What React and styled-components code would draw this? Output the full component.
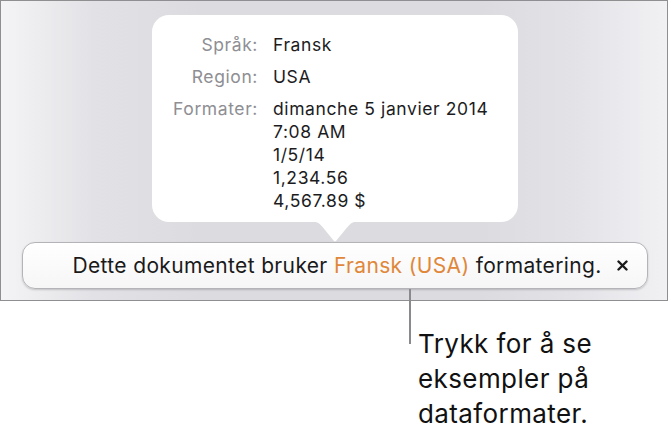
import React from 'react';
import styled, { createGlobalStyle } from 'styled-components';

const GlobalStyle = createGlobalStyle`
  html, body {
    margin: 0;
    padding: 0;
    background: #ffffff;
  }
  body {
    font-family: Inter, "Noto Sans", "Liberation Sans", sans-serif;
    -webkit-font-smoothing: antialiased;
  }
`;

const formats = [
  'dimanche 5 janvier 2014',
  '7:08 AM',
  '1/5/14',
  '1,234.56',
  '4,567.89 $',
];

function App() {
  return (
    <Page>
      <GlobalStyle />
      <Frame>
        <Popover>
          <Label>Språk:</Label>
          <Value>Fransk</Value>
          <Label>Region:</Label>
          <Value>USA</Value>
          <Label>Formater:</Label>
          <Value>
            {formats.map((f) => (
              <div key={f}>{f}</div>
            ))}
          </Value>
        </Popover>

        <Banner>
          <Message>
            Dette dokumentet bruker <Highlight>Fransk (USA)</Highlight> formatering.
          </Message>
          <CloseButton aria-label="Lukk">
            <svg width="11" height="11" viewBox="0 0 11 11">
              <path d="M1.5 1.5 L9.5 9.5 M9.5 1.5 L1.5 9.5" stroke="#1a1a1a" strokeWidth="2.4" strokeLinecap="round" />
            </svg>
          </CloseButton>
        </Banner>
      </Frame>

      <Callout>
        Trykk for å se
        <br />
        eksempler på
        <br />
        dataformater.
      </Callout>
    </Page>
  );
}

const Page = styled.div`
  width: 668px;
  height: 436px;
  overflow: hidden;
`;

const Frame = styled.div`
  box-sizing: border-box;
  width: 668px;
  height: 301px;
  border: 1.5px solid #8f8f92;
  background: linear-gradient(
    to right,
    #f4f4f6 0%,
    #e2e2e6 14%,
    #dcdce0 30%,
    #dcdce0 72%,
    #e3e3e7 86%,
    #f1f1f4 100%
  );
  display: flex;
  flex-direction: column;
  align-items: center;
  padding-top: 13.5px;
`;

const Popover = styled.div`
  position: relative;
  box-sizing: border-box;
  width: 366px;
  margin-left: 2px;
  padding: 18px 10px 10px 0;
  background: #ffffff;
  border-radius: 17px;
  display: grid;
  grid-template-columns: 106px 1fr;
  column-gap: 15px;
  row-gap: 9px;
  font-size: 17.5px;
  letter-spacing: 0.6px;
  line-height: 23px;

  &::after {
    content: '';
    position: absolute;
    left: 50%;
    bottom: -20px;
    width: 44px;
    height: 20px;
    margin-left: -22px;
    background: #ffffff;
    clip-path: path('M0 0 L44 0 C40 0 37 2 34 6 L23.2 19.2 C22.6 20 21.4 20 20.8 19.2 L10 6 C7 2 4 0 0 0 Z');
    z-index: 2;
  }
`;

const Label = styled.div`
  text-align: right;
  color: #8e8e93;
  white-space: nowrap;
`;

const Value = styled.div`
  color: #1c1c1e;
  white-space: nowrap;
`;

const Banner = styled.div`
  box-sizing: border-box;
  width: 626px;
  height: 47px;
  margin-top: 20px;
  margin-left: 1px;
  padding: 0 18px 0 50px;
  border: 1px solid #b4b4b8;
  border-radius: 13px;
  background: linear-gradient(to bottom, #ffffff 0%, #f6f6f7 100%);
  box-shadow: 0 1px 2px rgba(0, 0, 0, 0.18);
  display: flex;
  align-items: center;
`;

const Message = styled.div`
  flex: 1;
  font-size: 21px;
  letter-spacing: 0.35px;
  color: #1a1a1a;
  white-space: nowrap;
`;

const Highlight = styled.span`
  color: #e0873a;
`;

const CloseButton = styled.button`
  border: none;
  background: none;
  padding: 0;
  width: 12px;
  height: 12px;
  display: flex;
  align-items: center;
  justify-content: center;
  cursor: pointer;
`;

const Callout = styled.div`
  position: relative;
  margin-left: 418px;
  margin-top: 25px;
  font-size: 26px;
  letter-spacing: 0.4px;
  line-height: 35px;
  color: #111111;

  &::before {
    content: '';
    position: absolute;
    left: -9px;
    top: -37px;
    width: 2px;
    height: 55px;
    background: #8a8a8c;
  }
`;

export default App;
